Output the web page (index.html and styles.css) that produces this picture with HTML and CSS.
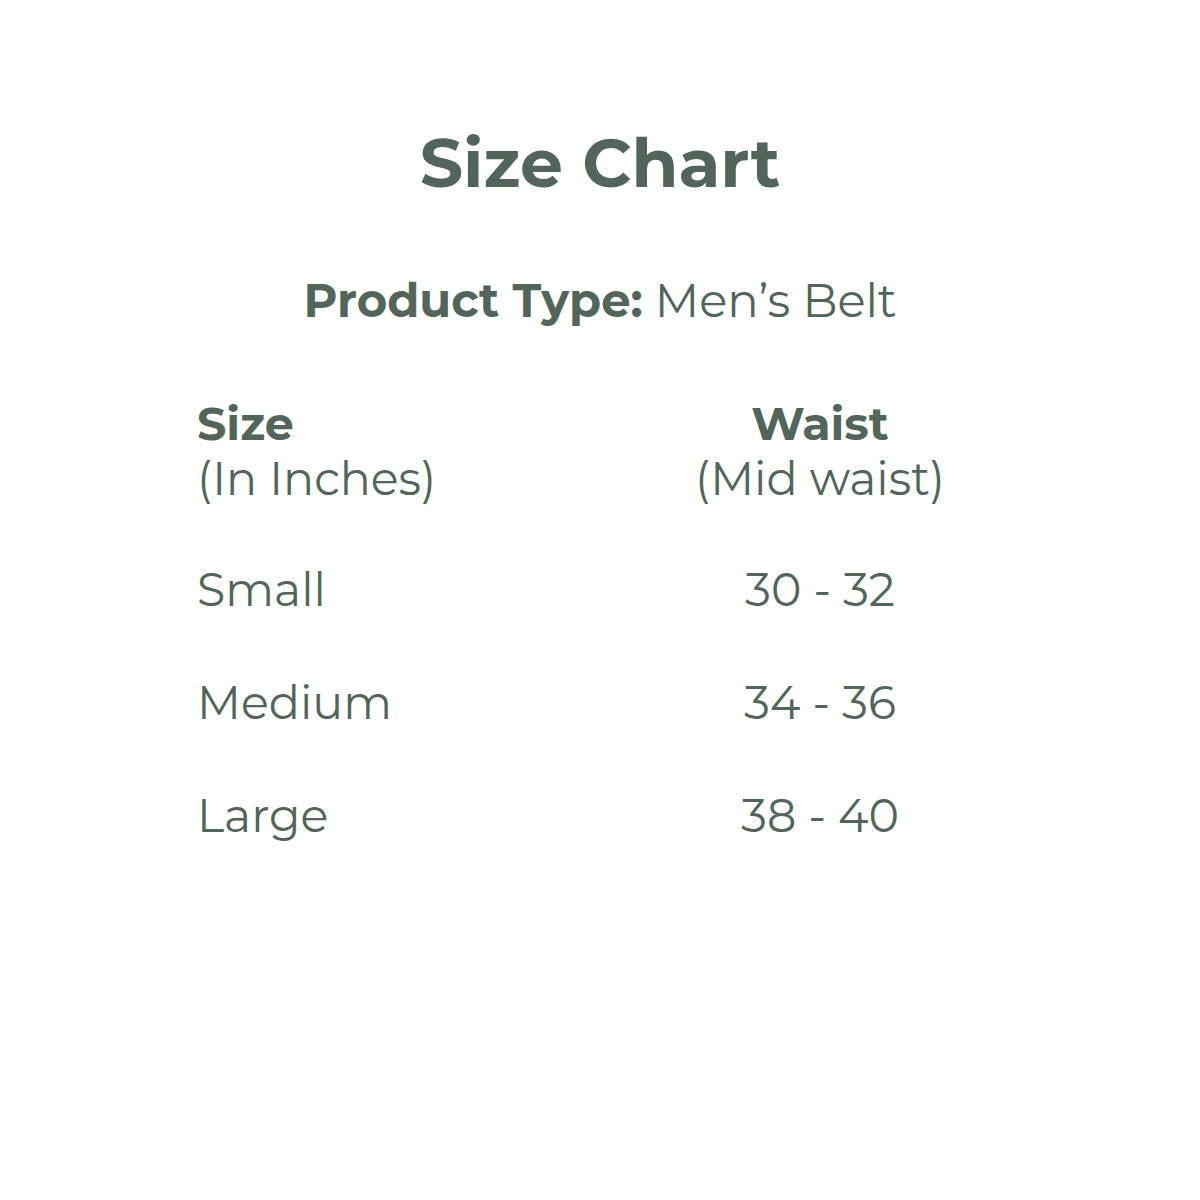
FILE: index.html
```html
<!DOCTYPE html>
<html lang="en">
<head>
<meta charset="utf-8">
<title>Size Chart</title>
<link rel="stylesheet" href="styles.css">
</head>
<body>
<main class="page">
  <h1 class="title">Size Chart</h1>
  <p class="product"><strong>Product Type:</strong> Men’s Belt</p>
  <div class="chart">
    <div class="head left"><strong>Size</strong><br>(In Inches)</div>
    <div class="head right"><strong>Waist</strong><br>(Mid waist)</div>
    <div class="cell left">Small</div>
    <div class="cell right">30 - 32</div>
    <div class="cell left">Medium</div>
    <div class="cell right">34 - 36</div>
    <div class="cell left">Large</div>
    <div class="cell right">38 - 40</div>
  </div>
</main>
</body>
</html>
```

FILE: styles.css
```css
html, body {
  margin: 0;
  padding: 0;
  background: #ffffff;
}
body {
  font-family: "Montserrat", "Open Sans", "DejaVu Sans", sans-serif;
  color: #52655a;
  width: 1200px;
  height: 1200px;
}
.page {
  padding-top: 123px;
}
.title {
  margin: 0;
  text-align: center;
  font-size: 68px;
  line-height: 80px;
  font-weight: 700;
}
.product {
  margin: 68px 0 0;
  text-align: center;
  font-size: 46.5px;
  line-height: 60px;
  font-weight: 400;
}
.product strong { font-weight: 700; }
.chart {
  margin-top: 65px;
  padding-left: 197px;
  display: grid;
  grid-template-columns: 373px 500px;
  font-size: 46px;
}
.head {
  line-height: 55px;
  margin-bottom: 27px;
}
.head strong { font-weight: 700; }
.cell {
  line-height: 113px;
}
.right { text-align: center; }
```
